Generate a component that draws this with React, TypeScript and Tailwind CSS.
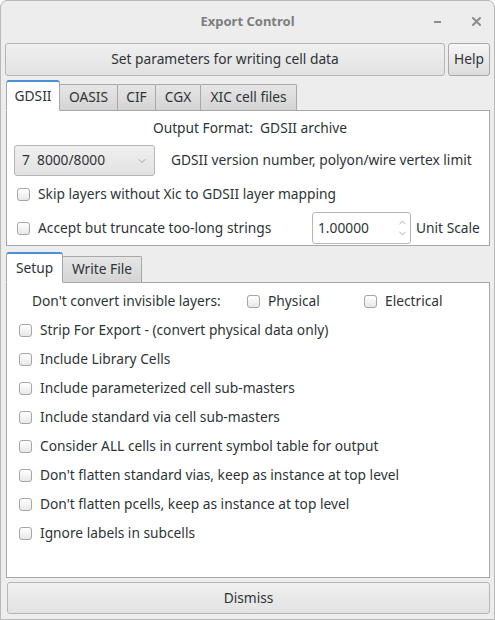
import { ChevronDown, ChevronUp } from "lucide-react";

const font = { fontFamily: '"Noto Sans", "Open Sans", sans-serif' };

function Check({ label }: { label: string }) {
  return (
    <label className="flex items-center gap-[8px] h-[29px]">
      <span className="w-[13px] h-[13px] rounded-[3px] border border-[#a6a6a6] bg-gradient-to-b from-white to-[#e8e8e8] shrink-0" />
      <span>{label}</span>
    </label>
  );
}

function Tab({ label, active, w }: { label: string; active?: boolean; w: string }) {
  if (active) {
    return (
      <div className={`${w} h-[31px] -mb-px relative z-10 flex items-center justify-center bg-white border border-[#a8a8a8] border-b-white rounded-t-[3px] border-t-2 border-t-[#4a90d9]`}>
        {label}
      </div>
    );
  }
  return (
    <div className={`${w} h-[26px] -ml-px flex items-center justify-center bg-gradient-to-b from-[#e6e6e6] to-[#d4d4d4] border border-[#a8a8a8] border-b-0 rounded-t-[2px]`}>
      {label}
    </div>
  );
}

export default function App() {
  const setup = [
    "Strip For Export - (convert physical data only)",
    "Include Library Cells",
    "Include parameterized cell sub-masters",
    "Include standard via cell sub-masters",
    "Consider ALL cells in current symbol table for output",
    "Don't flatten standard vias, keep as instance at top level",
    "Don't flatten pcells, keep as instance at top level",
    "Ignore labels in subcells",
  ];

  return (
    <div style={font} className="w-[495px] h-[620px] bg-[#ededed] text-[13.75px] text-[#2e3436] border border-[#b8b8b8] rounded-t-[7px] overflow-hidden flex flex-col">
      {/* title bar */}
      <div className="h-[41px] shrink-0 flex items-center relative">
        <div className="flex-1 text-center font-bold text-[13px] text-[#7b7e7f]">Export Control</div>
        <span className="absolute left-[433px] top-[20px] w-[7px] h-[2px] bg-[#8a8d8e]" />
        <svg className="absolute left-[471px] top-[16px]" width="9" height="9" viewBox="0 0 9 9">
          <path d="M1 1L8 8M8 1L1 8" stroke="#8a8d8e" strokeWidth="2" strokeLinecap="round" />
        </svg>
      </div>

      <div className="flex-1 flex flex-col px-[4px] pb-[5px]">
        {/* header buttons */}
        <div className="flex gap-[3px] h-[33px] shrink-0 mt-[1px]">
          <div className="w-[440px] flex items-center justify-center border border-[#b6b6b6] rounded-[3px] bg-gradient-to-b from-[#f0f0f0] to-[#e2e2e2]">
            Set parameters for writing cell data
          </div>
          <div className="flex-1 flex items-center justify-center border border-[#a8a8a8] rounded-[3px] bg-gradient-to-b from-[#f6f6f6] to-[#dcdcdc]">
            Help
          </div>
        </div>

        {/* first notebook */}
        <div className="mt-[4px] flex items-end pl-[1px]">
          <Tab label="GDSII" active w="w-[54px]" />
          <Tab label="OASIS" w="w-[59px]" />
          <Tab label="CIF" w="w-[39px]" />
          <Tab label="CGX" w="w-[46px]" />
          <Tab label="XIC cell files" w="w-[97px]" />
        </div>
        <div className="h-[136px] shrink-0 ml-[1px] bg-white border border-[#a8a8a8] pl-[10px] pr-[6px] flex flex-col">
          <div className="text-center mt-[7px] leading-[20px]">Output Format:&nbsp; GDSII archive</div>
          <div className="flex items-center mt-[7px]">
            <div className="w-[141px] h-[31px] pl-[7px] pr-[6px] flex items-center justify-between border border-[#b6b6b6] rounded-[3px] bg-gradient-to-b from-[#f0f0f0] to-[#e2e2e2] -ml-[3px]">
              <span>7&nbsp; 8000/8000</span>
              <ChevronDown size={12} strokeWidth={1.5} className="text-[#8a8a8a]" />
            </div>
            <span className="ml-[16px]">GDSII version number, polyon/wire vertex limit</span>
          </div>
          <div className="mt-[4px]">
            <Check label="Skip layers without Xic to GDSII layer mapping" />
          </div>
          <div className="flex items-center mt-[3px]">
            <div className="w-[295px]">
              <Check label="Accept but truncate too-long strings" />
            </div>
            <div className="w-[99px] h-[32px] flex items-stretch border border-[#b6b6b6] rounded-[3px] bg-white">
              <span className="flex-1 flex items-center pl-[5px]">1.00000</span>
              <span className="w-[16px] flex flex-col items-center justify-center text-[#8a8a8a]">
                <ChevronUp size={11} strokeWidth={1.5} />
                <ChevronDown size={11} strokeWidth={1.5} />
              </span>
            </div>
            <span className="ml-[5px]">Unit Scale</span>
          </div>
        </div>

        {/* second notebook */}
        <div className="mt-[6px] flex items-end pl-[1px]">
          <Tab label="Setup" active w="w-[57px]" />
          <Tab label="Write File" w="w-[80px]" />
        </div>
        <div className="flex-1 ml-[1px] bg-white border border-[#a8a8a8] pl-[12px] pt-[4px] flex flex-col">
          <div className="flex items-center h-[29px]">
            <span className="ml-[13px] w-[215px]">Don't convert invisible layers:</span>
            <div className="w-[117px]">
              <Check label="Physical" />
            </div>
            <Check label="Electrical" />
          </div>
          {setup.map((s) => (
            <Check key={s} label={s} />
          ))}
        </div>

        {/* dismiss */}
        <div className="mt-[4px] h-[32px] shrink-0 ml-[2px] flex items-center justify-center border border-[#b6b6b6] rounded-[3px] bg-gradient-to-b from-[#f0f0f0] to-[#e2e2e2]">
          Dismiss
        </div>
      </div>
    </div>
  );
}
